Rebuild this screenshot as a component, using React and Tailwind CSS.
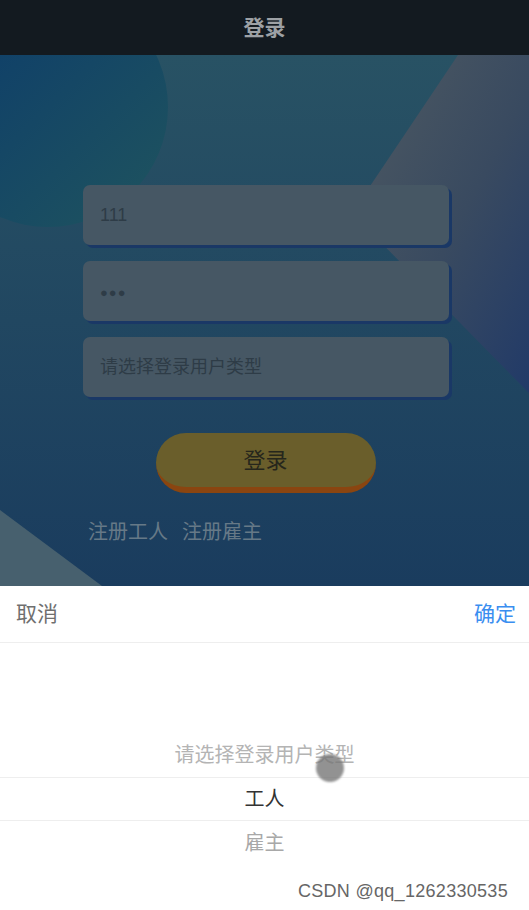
import React from 'react';

const font = { fontFamily: '"Liberation Sans", "Noto Sans CJK SC", sans-serif' };

const Backdrop = () => (
  <svg className="absolute inset-0 w-full h-full" viewBox="0 0 529 531" preserveAspectRatio="none">
    <defs>
      <linearGradient id="base" x1="0" y1="0" x2="0" y2="1">
        <stop offset="0" stopColor="#285264" />
        <stop offset="1" stopColor="#1a3c5e" />
      </linearGradient>
      <linearGradient id="blob" x1="0" y1="0" x2="1" y2="1">
        <stop offset="0" stopColor="#0b3a6c" />
        <stop offset="1" stopColor="#1f545e" />
      </linearGradient>
      <linearGradient id="wedge" x1="0" y1="0" x2="1" y2="1">
        <stop offset="0" stopColor="#4e5a62" />
        <stop offset="0.55" stopColor="#394a60" />
        <stop offset="1" stopColor="#213a68" />
      </linearGradient>
    </defs>
    <rect width="529" height="531" fill="url(#base)" />
    <circle cx="48" cy="52" r="120" fill="url(#blob)" />
    <polygon points="458,0 529,0 529,338 352,158" fill="url(#wedge)" />
    <polygon points="0,455 102,531 0,531" fill="#47606e" />
  </svg>
);

const Field = ({ children }) => (
  <div className="h-[60px] rounded-[7px] bg-[#465764] shadow-[3px_3px_0_#1a3866] flex items-center pl-[17px]">
    <span className="text-[18px] text-[#2e3c47]">{children}</span>
  </div>
);

export default function App() {
  return (
    <div className="w-[529px] h-[910px] overflow-hidden relative bg-white" style={font}>
      <div className="h-[55px] bg-[#131a20] flex items-center justify-center">
        <span className="text-[21px] font-bold text-[#9da1a5]">登录</span>
      </div>

      <div className="relative h-[531px]">
        <Backdrop />
        <div className="relative pt-[130px] pl-[83px] w-[449px]">
          <div className="flex flex-col gap-[16px]">
            <Field>111</Field>
            <Field><span className="text-[13px] tracking-[1px]">●●●</span></Field>
            <Field>请选择登录用户类型</Field>
          </div>
          <div className="flex justify-center mt-[36px] pr-[1px]">
            <button className="w-[220px] h-[60px] rounded-full bg-[#6a5e2b] border-b-[6px] border-[#8a4510] text-[22px] text-[#26261c] flex items-center justify-center">
              登录
            </button>
          </div>
          <div className="flex gap-[14px] mt-[24px] pl-[5px] text-[20px] text-[#667987]">
            <span>注册工人</span>
            <span>注册雇主</span>
          </div>
        </div>
      </div>

      <div className="bg-white">
        <div className="h-[57px] flex items-center justify-between pl-[16px] pr-[13px] border-b border-[#eeeeee]">
          <span className="text-[21px] text-[#6f6f6f]">取消</span>
          <span className="text-[21px] text-[#3a8ef0]">确定</span>
        </div>
        <div className="pt-[90px] text-[20px]">
          <div className="h-[44px] flex items-center justify-center text-[#b4b4b4]">请选择登录用户类型</div>
          <div className="h-[44px] flex items-center justify-center text-[#333333] border-y border-[#eeeeee]">工人</div>
          <div className="h-[44px] flex items-center justify-center text-[#a8a8a8]">雇主</div>
        </div>
      </div>

      <div className="absolute left-[316px] top-[754px] w-[28px] h-[28px] rounded-full bg-[#777777] opacity-80 blur-[1px]" />
      <div className="absolute right-[21px] top-[878px] text-[18px] text-[#666666] tracking-[0.3px]">CSDN @qq_1262330535</div>
    </div>
  );
}
